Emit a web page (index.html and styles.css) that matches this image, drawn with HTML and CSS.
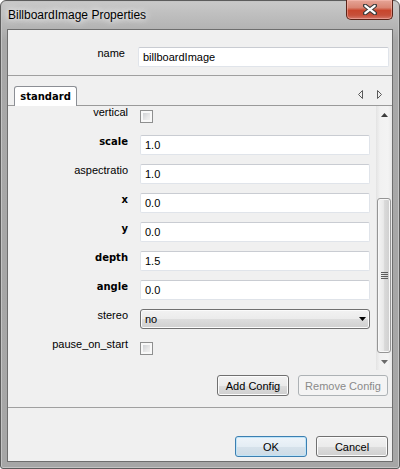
FILE: index.html
```html
<!DOCTYPE html>
<html>
<head>
<meta charset="utf-8">
<link rel="stylesheet" href="styles.css">
</head>
<body>
<div class="window">
  <div class="titlebar">
    <span class="title">BillboardImage Properties</span>
    <div class="close">
      <svg width="14" height="11" viewBox="0 0 14 11">
        <path d="M2 1.5 L12 9.5 M12 1.5 L2 9.5" stroke="#3a3a3a" stroke-width="4.2" stroke-linecap="round"/>
        <path d="M2.3 1.8 L11.7 9.2 M11.7 1.8 L2.3 9.2" stroke="#ffffff" stroke-width="2.2" stroke-linecap="round"/>
      </svg>
    </div>
  </div>
  <div class="client">
    <div class="name-row">
      <span class="lbl name-lbl">name</span>
      <div class="input">billboardImage</div>
    </div>
    <div class="hsep"></div>
    <div class="tabbar">
      <div class="tab">standard</div>
      <svg class="tab-arrows" width="26" height="10" viewBox="0 0 26 10">
        <polygon points="5.5,0.5 1.5,4.5 5.5,8.5" fill="none" stroke="#5a5a5a" stroke-width="1"/>
        <polygon points="20.5,0.5 24.5,4.5 20.5,8.5" fill="none" stroke="#5a5a5a" stroke-width="1"/>
      </svg>
    </div>
    <div class="panel">
      <div class="scrollview">
        <div class="form">
          <span class="lbl">vertical</span>
          <span class="check"></span>

          <span class="lbl b">scale</span>
          <div class="input">1.0</div>

          <span class="lbl">aspectratio</span>
          <div class="input">1.0</div>

          <span class="lbl b">x</span>
          <div class="input">0.0</div>

          <span class="lbl b">y</span>
          <div class="input">0.0</div>

          <span class="lbl b">depth</span>
          <div class="input">1.5</div>

          <span class="lbl b">angle</span>
          <div class="input">0.0</div>

          <span class="lbl">stereo</span>
          <div class="select">
            <span>no</span>
            <svg width="7" height="4" viewBox="0 0 7 4"><polygon points="0,0 7,0 3.5,4" fill="#000"/></svg>
          </div>

          <span class="lbl">pause_on_start</span>
          <span class="check"></span>
        </div>
      </div>
      <div class="vscroll">
        <div class="sb-btn">
          <svg width="7" height="4" viewBox="0 0 7 4"><polygon points="3.5,0 7,4 0,4" fill="#3c3c3c"/></svg>
        </div>
        <div class="sb-before"></div>
        <div class="thumb">
          <svg width="7" height="7" viewBox="0 0 7 7">
            <path d="M0 0.5 H7 M0 2.5 H7 M0 4.5 H7 M0 6.5 H7" stroke="#5d5d5d" stroke-width="1"/>
          </svg>
        </div>
        <div class="sb-after"></div>
        <div class="sb-btn">
          <svg width="7" height="4" viewBox="0 0 7 4"><polygon points="0,0 7,0 3.5,4" fill="#6a6a6a"/></svg>
        </div>
      </div>
    </div>
    <div class="actions">
      <button class="btn w72">Add Config</button>
      <button class="btn w90" disabled>Remove Config</button>
    </div>
    <div class="hsep"></div>
    <div class="footer">
      <button class="btn w72 default">OK</button>
      <button class="btn w72">Cancel</button>
    </div>
  </div>
</div>
</body>
</html>
```

FILE: styles.css
```css
* { box-sizing: border-box; }
html, body { margin: 0; padding: 0; }
body {
  width: 400px;
  height: 469px;
  overflow: hidden;
  font-family: "Liberation Sans", Arial, sans-serif;
  font-size: 11px;
  color: #000;
  background: #fff;
}

.window {
  width: 400px;
  height: 469px;
  border: 1px solid #5c5c5c;
  border-radius: 6px 6px 3px 3px;
  background: linear-gradient(#c9c9c9 0px, #b3b3b3 28px, #a8a8a8 40px, #a6a6a6);
  box-shadow: inset 0 0 0 1px #c4c4c4;
  display: flex;
  flex-direction: column;
  padding: 0 6px 6px 6px;
}

.titlebar {
  height: 28px;
  display: flex;
  align-items: flex-start;
}
.title {
  margin-left: 1px;
  margin-top: 7px;
  font-size: 12px;
  line-height: 14px;
  color: #000;
  text-shadow: 0 0 6px #fff, 0 0 10px rgba(255,255,255,0.9);
}
.close {
  margin-left: auto;
  margin-right: 0px;
  margin-top: -1px;
  width: 47px;
  height: 20px;
  border: 1px solid #5b2318;
  border-top: none;
  border-radius: 0 0 5px 5px;
  background: linear-gradient(#e6a597 0%, #d98573 40%, #c8462d 55%, #c6503a 80%, #d4786a 100%);
  box-shadow: inset 0 0 0 1px rgba(255,200,190,0.45);
  display: flex;
  align-items: center;
  justify-content: center;
}

.client {
  flex: 1;
  border: 1px solid #6e6e6e;
  background: #f0f0f0;
  display: flex;
  flex-direction: column;
}

.lbl {
  line-height: 13px;
  text-align: right;
  white-space: nowrap;
  align-self: start;
}
.lbl.b {
  font-family: "DejaVu Sans", sans-serif;
  font-weight: bold;
  font-size: 10px;
}

.name-row {
  height: 45px;
  display: flex;
  align-items: flex-start;
  padding: 17px 3px 0 0;
}
.name-lbl {
  width: 117px;
  margin-right: 13px;
}
.name-row .input { flex: 1; }

.input {
  height: 20px;
  background: #fff;
  border: 1px solid #e0e4ea;
  border-top-color: #c9ccd2;
  border-radius: 2px;
  padding: 0 4px;
  line-height: 18px;
  white-space: nowrap;
}

.hsep {
  height: 1px;
  background: #a0a0a0;
  flex: none;
}

.tabbar {
  height: 29px;
  display: flex;
  align-items: flex-end;
  padding-left: 6px;
}
.tab {
  position: relative;
  z-index: 1;
  width: 63px;
  height: 20px;
  margin-bottom: -1px;
  background: #fff;
  border: 1px solid #8c8f95;
  border-bottom: none;
  border-radius: 3px 3px 0 0;
  padding-top: 2px;
  line-height: 16px;
  text-align: center;
  font-family: "DejaVu Sans", sans-serif;
  font-weight: bold;
  font-size: 10px;
}
.tab-arrows {
  margin-left: auto;
  margin-right: 9px;
  align-self: flex-start;
  margin-top: 14px;
}

.panel {
  height: 265px;
  border-top: 1px solid #9a9a9a;
  display: flex;
  flex: none;
}
.scrollview {
  flex: 1;
  overflow: hidden;
}
.form {
  display: grid;
  grid-template-columns: 120px 230px;
  grid-auto-rows: 20px;
  column-gap: 12px;
  row-gap: 9px;
}
.check {
  align-self: center;
  justify-self: start;
  width: 13px;
  height: 13px;
  border: 1px solid #8e8f8f;
  background: linear-gradient(135deg, #c4c7cc, #e9e9e9 60%, #f6f6f6);
  box-shadow: inset 0 0 0 2px #f8f8f8;
}
.select {
  height: 20px;
  border: 1px solid #707070;
  border-radius: 3px;
  background: linear-gradient(#f2f2f2 0%, #ebebeb 50%, #dddddd 51%, #cfcfcf 100%);
  box-shadow: inset 0 0 0 1px #fbfbfb;
  display: flex;
  align-items: center;
  justify-content: space-between;
  padding: 0 3px 0 4px;
  line-height: 18px;
}

.vscroll {
  width: 16px;
  flex: none;
  display: flex;
  flex-direction: column;
  align-items: stretch;
  background: linear-gradient(90deg, #e3e3e3, #f1f1f1 25%, #f3f3f3 75%, #e8e8e8);
}
.sb-btn {
  height: 17px;
  display: flex;
  align-items: center;
  justify-content: center;
}
.sb-before { height: 75px; }
.sb-after { flex: 1; }
.thumb {
  height: 155px;
  margin: 0 1px;
  border: 1px solid #959595;
  border-radius: 3px;
  background: linear-gradient(90deg, #f4f4f4 0%, #e9e9e9 45%, #d9d9d9 55%, #cfcfcf 100%);
  box-shadow: inset 0 0 0 1px #f8f8f8;
  display: flex;
  align-items: center;
  justify-content: center;
}

.actions {
  height: 37px;
  display: flex;
  justify-content: flex-end;
  align-items: flex-start;
  gap: 9px;
  padding: 5px 4px 0 0;
  flex: none;
}
.footer {
  flex: 1;
  display: flex;
  justify-content: flex-end;
  align-items: flex-start;
  gap: 9px;
  padding: 28px 4px 0 0;
}

.btn {
  height: 21px;
  margin: 0;
  padding: 0;
  font-family: "Liberation Sans", Arial, sans-serif;
  font-size: 11px;
  color: #000;
  border: 1px solid #707070;
  border-radius: 3px;
  background: linear-gradient(#f2f2f2 0%, #ebebeb 50%, #dddddd 51%, #cfcfcf 100%);
  box-shadow: inset 0 0 0 1px #fcfcfc;
  line-height: 18px;
}
.w72 { width: 72px; }
.w90 { width: 90px; }
.btn:disabled {
  color: #8a8a8a;
  border-color: #adb2b5;
  background: #f4f4f4;
  box-shadow: none;
}
.btn.default {
  border-color: #3c7fb1;
  background: linear-gradient(#eef4f9 0%, #e4edf4 50%, #d6e2eb 51%, #cddbe6 100%);
  box-shadow: inset 0 0 0 1px #bfe4f8;
}
```
